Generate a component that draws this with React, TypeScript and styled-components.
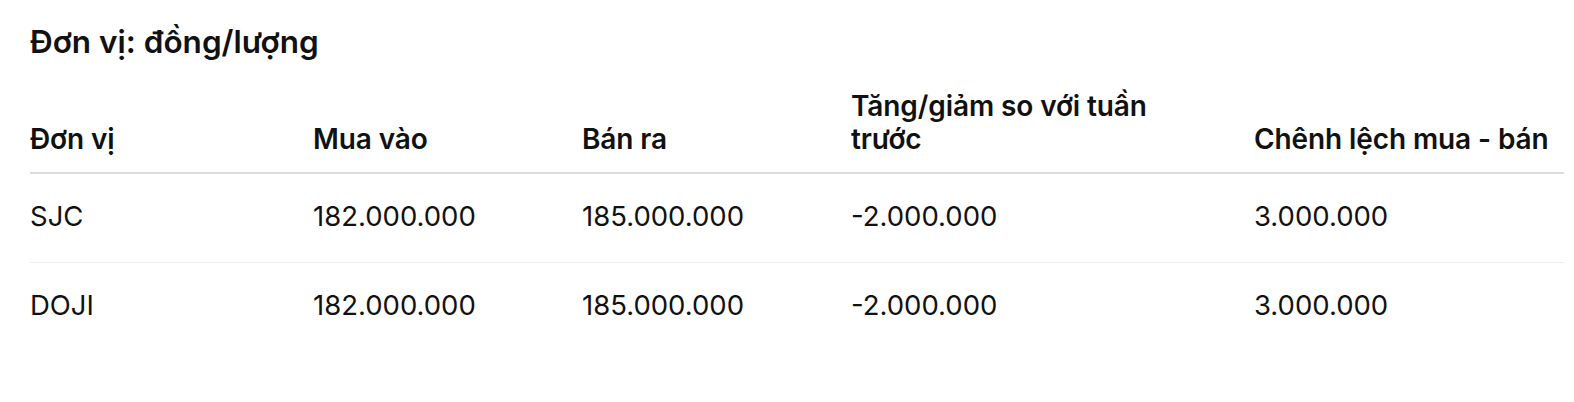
import React from "react";
import styled, { createGlobalStyle } from "styled-components";

const Global = createGlobalStyle`
  html, body { margin: 0; padding: 0; background: #fff; }
  body { font-family: Inter, "Noto Sans", "Liberation Sans", sans-serif; color: #111; }
`;

const Page = styled.div`
  padding: 22px 10px 0 30px;
`;

const Title = styled.h2`
  margin: 0 0 28px;
  font-size: 31.5px;
  font-weight: 600;
  line-height: 40px;
  letter-spacing: 0;
`;

const Table = styled.table`
  width: 100%;
  border-collapse: collapse;
  table-layout: fixed;
`;

const HeadCell = styled.th`
  text-align: left;
  vertical-align: bottom;
  font-size: 28px;
  font-weight: 600;
  line-height: 33px;
  letter-spacing: -0.1px;
  padding: 0 40px 16px 0;
  border-bottom: 2px solid #dcdcdc;
  &:last-child { padding-right: 0; }
`;

const Row = styled.tr<{ $last?: boolean }>`
  border-bottom: ${(p) => (p.$last ? "none" : "1px solid #eeeeee")};
`;

const Cell = styled.td`
  font-size: 27.5px;
  font-weight: 400;
  line-height: 33px;
  letter-spacing: 0;
  padding: 26px 40px 29px 0;
  vertical-align: middle;
  &:last-child { padding-right: 0; }
`;

const widths = [283, 269, 269, 403, undefined];
const headers = ["Đơn vị", "Mua vào", "Bán ra", "Tăng/giảm so với tuần trước", "Chênh lệch mua - bán"];
const rows = [
  ["SJC", "182.000.000", "185.000.000", "-2.000.000", "3.000.000"],
  ["DOJI", "182.000.000", "185.000.000", "-2.000.000", "3.000.000"],
];

export default function App() {
  return (
    <>
      <Global />
      <Page>
        <Title>Đơn vị: đồng/lượng</Title>
        <Table>
          <colgroup>
            {widths.map((w, i) => (
              <col key={i} style={w ? { width: w } : undefined} />
            ))}
          </colgroup>
          <thead>
            <tr>
              {headers.map((h) => (
                <HeadCell key={h}>{h}</HeadCell>
              ))}
            </tr>
          </thead>
          <tbody>
            {rows.map((r, i) => (
              <Row key={r[0]} $last={i === rows.length - 1}>
                {r.map((c, j) => (
                  <Cell key={j}>{c}</Cell>
                ))}
              </Row>
            ))}
          </tbody>
        </Table>
      </Page>
    </>
  );
}
